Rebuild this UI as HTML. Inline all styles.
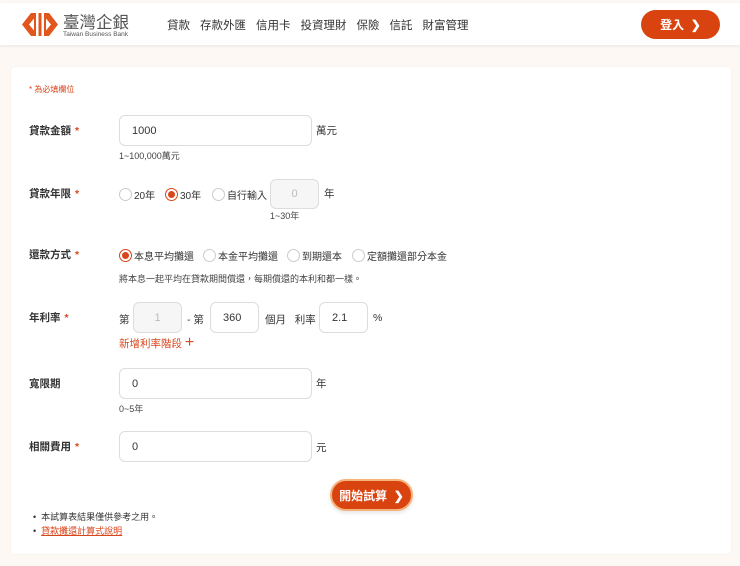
<!DOCTYPE html>
<html><head><meta charset="utf-8"><style>
*{box-sizing:border-box;margin:0;padding:0}
body{width:740px;height:566px;background:#fdf8f4;font-family:"Liberation Sans","Noto Sans CJK TC",sans-serif;color:#333;position:relative;overflow:hidden;font-size:10.5px}
.a{position:absolute;white-space:nowrap}
.hdr{position:absolute;left:0;top:3px;width:740px;height:42px;background:#fff;box-shadow:0 1px 3px rgba(0,0,0,.08)}
.card{position:absolute;left:11px;top:67px;width:720px;height:487px;background:#fff;border-radius:4px;box-shadow:0 0 2px rgba(0,0,0,.05)}
.lbl{font-weight:bold;font-size:10.5px;color:#333}
.lbl i{color:#d8461c;font-style:normal;margin-left:4px}
.inp{position:absolute;border:1px solid #ddd;border-radius:6px;background:#fff;font-size:11px;padding-left:12px;display:flex;align-items:center;height:31px}
.dis{background:#f6f6f6;color:#bbb;justify-content:center;padding:0}
.r{position:absolute;width:13px;height:13px;border:1px solid #ccc;border-radius:50%;background:#fff}
.r.on{border-color:#d8461c}
.r.on:after{content:"";position:absolute;left:2px;top:2px;width:7px;height:7px;border-radius:50%;background:#d8461c}
.s{font-size:9px;color:#444}
.rl{font-size:10px}
.nav span{margin-right:10px}
</style></head><body>
<div class="a" style="left:11px;top:4px;font-size:9px;letter-spacing:-1px;line-height:5px;color:#444">∙∙∙<br>∙∙∙</div>
<div class="hdr">
<svg class="a" style="left:22px;top:9px" width="36" height="25" viewBox="0 0 36 25"><polygon points="0,12.5 9,1 27,1 36,12.5 27,24 9,24" fill="#e2561d"/><rect x="14" y="1" width="8" height="23" fill="#fff"/><rect x="16.5" y="1" width="3" height="23" fill="#e2561d"/><polygon points="7,12.5 12,6.5 12,18.5" fill="#fff"/><polygon points="29,12.5 24,6.5 24,18.5" fill="#fff"/></svg>
<div class="a" style="left:63px;top:6px;font-size:16.5px;color:#555">臺灣企銀</div>
<div class="a" style="left:63px;top:28px;font-size:6.5px;color:#555">Taiwan Business Bank</div>
<div class="a nav" style="left:167px;top:14px;font-size:11.5px;color:#333"><span>貸款</span><span>存款外匯</span><span>信用卡</span><span>投資理財</span><span>保險</span><span>信託</span><span>財富管理</span></div>
<div class="a" style="left:641px;top:7px;width:79px;height:29px;border-radius:15px;background:#d9430f;color:#fff;font-weight:bold;font-size:12px;display:flex;align-items:center;justify-content:center">登入 &nbsp;❯</div>
</div>
<div class="card"></div>
<div class="a" style="left:29px;top:84px;font-size:8px;color:#d8461c">* 為必填欄位</div>

<div class="a lbl" style="left:29px;top:123px">貸款金額<i>*</i></div>
<div class="inp" style="left:119px;top:115px;width:193px">1000</div>
<div class="a" style="left:316px;top:123px">萬元</div>
<div class="a s" style="left:119px;top:149px">1~100,000萬元</div>

<div class="a lbl" style="left:29px;top:186px">貸款年限<i>*</i></div>
<div class="r" style="left:119px;top:188px"></div><div class="a rl" style="left:134px;top:187px">20年</div>
<div class="r on" style="left:165px;top:188px"></div><div class="a rl" style="left:180px;top:187px">30年</div>
<div class="r" style="left:212px;top:188px"></div><div class="a rl" style="left:227px;top:187px">自行輸入</div>
<div class="inp dis" style="left:270px;top:179px;width:49px;height:30px">0</div>
<div class="a" style="left:324px;top:186px">年</div>
<div class="a s" style="left:270px;top:209px">1~30年</div>

<div class="a lbl" style="left:29px;top:247px">還款方式<i>*</i></div>
<div class="r on" style="left:119px;top:249px"></div><div class="a rl" style="left:134px;top:248px">本息平均攤還</div>
<div class="r" style="left:203px;top:249px"></div><div class="a rl" style="left:218px;top:248px">本金平均攤還</div>
<div class="r" style="left:287px;top:249px"></div><div class="a rl" style="left:302px;top:248px">到期還本</div>
<div class="r" style="left:352px;top:249px"></div><div class="a rl" style="left:367px;top:248px">定額攤還部分本金</div>
<div class="a s" style="left:119px;top:272px">將本息一起平均在貸款期間償還，每期償還的本利和都一樣。</div>

<div class="a lbl" style="left:29px;top:310px">年利率<i>*</i></div>
<div class="a" style="left:119px;top:312px">第</div>
<div class="inp dis" style="left:133px;top:302px;width:49px">1</div>
<div class="a" style="left:187px;top:312px">- 第</div>
<div class="inp" style="left:210px;top:302px;width:49px">360</div>
<div class="a" style="left:265px;top:312px">個月 &nbsp;&nbsp;利率</div>
<div class="inp" style="left:319px;top:302px;width:49px">2.1</div>
<div class="a" style="left:373px;top:312px">%</div>
<div class="a" style="left:119px;top:336px;color:#d8461c">新增利率階段 <span style="font-size:16px;line-height:10px">+</span></div>

<div class="a lbl" style="left:29px;top:376px">寬限期</div>
<div class="inp" style="left:119px;top:368px;width:193px">0</div>
<div class="a" style="left:316px;top:376px">年</div>
<div class="a s" style="left:119px;top:402px">0~5年</div>

<div class="a lbl" style="left:29px;top:439px">相關費用<i>*</i></div>
<div class="inp" style="left:119px;top:431px;width:193px">0</div>
<div class="a" style="left:316px;top:440px">元</div>

<div class="a" style="left:330px;top:479px;width:83px;height:32px;border-radius:16px;background:#d9430f;border:2px solid #f5b27a;color:#fff;font-weight:bold;font-size:12px;display:flex;align-items:center;justify-content:center;box-shadow:0 2px 4px rgba(0,0,0,.1)">開始試算 &nbsp;❯</div>

<div class="a" style="left:33px;top:510px;font-size:9px">•&nbsp; 本試算表結果僅供參考之用。</div>
<div class="a" style="left:33px;top:524px;font-size:9px">•&nbsp; <span style="color:#d8461c;text-decoration:underline">貸款攤還計算式說明</span></div>
</body></html>
